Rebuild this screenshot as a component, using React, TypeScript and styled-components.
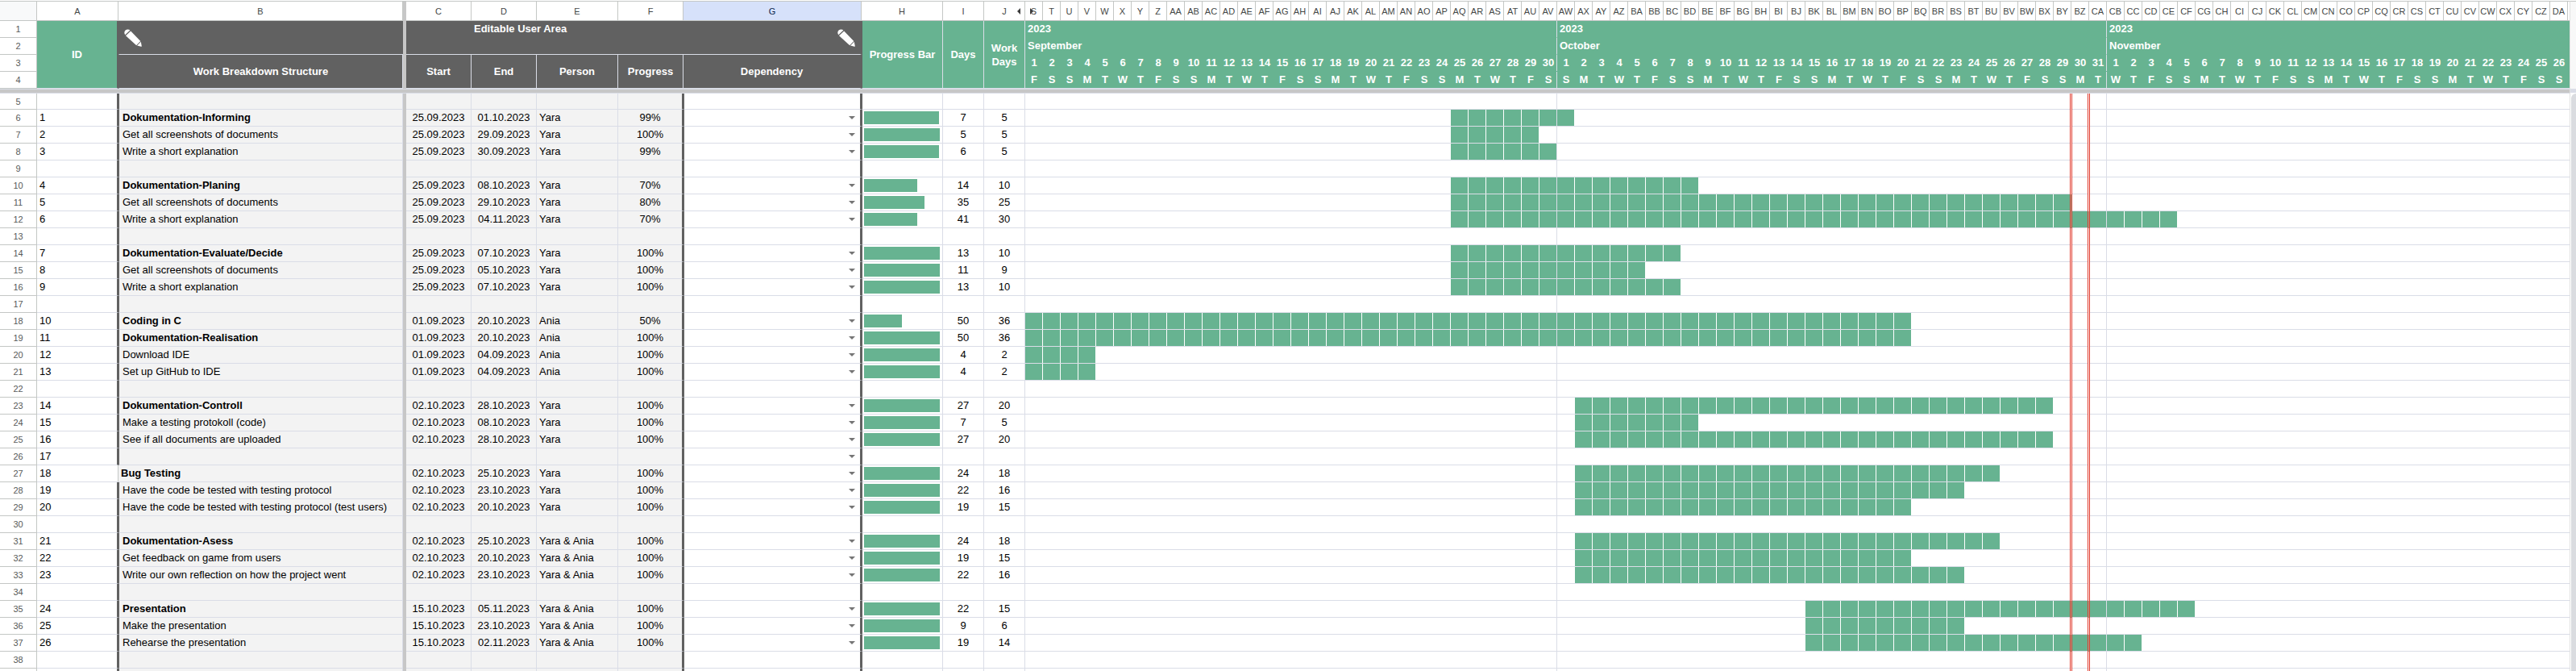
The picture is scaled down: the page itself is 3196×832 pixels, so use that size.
import React from "react";
import styled, { createGlobalStyle, css } from "styled-components";

const GREEN = "#67b391";
const DARK = "#616161";
const LINE = "#dadde7";
const RULE = "#c4c7c5";
const FREEZE = "#c7c7c7";
const RED = "#e0392b";

const GlobalStyle = createGlobalStyle`
  *, *::before, *::after { box-sizing: border-box; }
  body {
    margin: 0;
    background: #fff;
    color: #000;
    font-family: "Liberation Sans", Arial, sans-serif;
    font-size: 13px;
    line-height: 20px;
  }
`;

type Task = {
  id: string;
  name?: string;
  bold?: boolean;
  start?: string;
  end?: string;
  person?: string;
  progress?: number;
  days?: number;
  workDays?: number;
  unboxed?: boolean;
};

const task = (
  id: string, name: string, start: string, end: string, person: string,
  progress: number, days: number, workDays: number, bold = false, unboxed = false,
): Task => ({ id, name, start, end, person, progress, days, workDays, bold, unboxed });

const ROWS: (Task | null)[] = [
  null,
  task("1", "Dokumentation-Informing", "25.09.2023", "01.10.2023", "Yara", 99, 7, 5, true),
  task("2", "Get all screenshots of documents", "25.09.2023", "29.09.2023", "Yara", 100, 5, 5),
  task("3", "Write a short explanation", "25.09.2023", "30.09.2023", "Yara", 99, 6, 5),
  null,
  task("4", "Dokumentation-Planing", "25.09.2023", "08.10.2023", "Yara", 70, 14, 10, true),
  task("5", "Get all screenshots of documents", "25.09.2023", "29.10.2023", "Yara", 80, 35, 25),
  task("6", "Write a short explanation", "25.09.2023", "04.11.2023", "Yara", 70, 41, 30),
  null,
  task("7", "Dokumentation-Evaluate/Decide", "25.09.2023", "07.10.2023", "Yara", 100, 13, 10, true),
  task("8", "Get all screenshots of documents", "25.09.2023", "05.10.2023", "Yara", 100, 11, 9),
  task("9", "Write a short explanation", "25.09.2023", "07.10.2023", "Yara", 100, 13, 10),
  null,
  task("10", "Coding in C", "01.09.2023", "20.10.2023", "Ania", 50, 50, 36, true),
  task("11", "Dokumentation-Realisation", "01.09.2023", "20.10.2023", "Ania", 100, 50, 36, true),
  task("12", "Download IDE", "01.09.2023", "04.09.2023", "Ania", 100, 4, 2),
  task("13", "Set up GitHub to IDE", "01.09.2023", "04.09.2023", "Ania", 100, 4, 2),
  null,
  task("14", "Dokumentation-Controll", "02.10.2023", "28.10.2023", "Yara", 100, 27, 20, true),
  task("15", "Make a testing protokoll (code)", "02.10.2023", "08.10.2023", "Yara", 100, 7, 5),
  task("16", "See if all documents are uploaded", "02.10.2023", "28.10.2023", "Yara", 100, 27, 20),
  { id: "17" },
  task("18", "Bug Testing", "02.10.2023", "25.10.2023", "Yara", 100, 24, 18, true, true),
  task("19", "Have the code be tested with testing protocol", "02.10.2023", "23.10.2023", "Yara", 100, 22, 16),
  task("20", "Have the code be tested with testing protocol (test users)", "02.10.2023", "20.10.2023", "Yara", 100, 19, 15),
  null,
  task("21", "Dokumentation-Asess", "02.10.2023", "25.10.2023", "Yara & Ania", 100, 24, 18, true),
  task("22", "Get feedback on game from users", "02.10.2023", "20.10.2023", "Yara & Ania", 100, 19, 15),
  task("23", "Write our own reflection on how the project went", "02.10.2023", "23.10.2023", "Yara & Ania", 100, 22, 16),
  null,
  task("24", "Presentation", "15.10.2023", "05.11.2023", "Yara & Ania", 100, 22, 15, true),
  task("25", "Make the presentation", "15.10.2023", "23.10.2023", "Yara & Ania", 100, 9, 6),
  task("26", "Rehearse the presentation", "15.10.2023", "02.11.2023", "Yara & Ania", 100, 19, 14),
  null,
];

const MONTHS = [
  { name: "September", year: "2023", length: 30, shown: 30 },
  { name: "October", year: "2023", length: 31, shown: 31 },
  { name: "November", year: "2023", length: 30, shown: 26 },
];
const DAYS = MONTHS.flatMap((m) =>
  Array.from({ length: m.shown }, (_, i) => ({ day: i + 1, last: i + 1 === m.length })),
).map((d, index) => ({ ...d, index, weekday: "FSSMTWT"[index % 7] }));

const TODAY = 59;

const dayIndex = (date: string) => {
  const [day, month] = date.split(".").map(Number);
  return MONTHS.slice(0, month - 9).reduce((sum, m) => sum + m.length, 0) + day - 1;
};

const columnName = (n: number): string =>
  n < 26 ? String.fromCharCode(65 + n) : columnName(Math.floor(n / 26) - 1) + String.fromCharCode(65 + (n % 26));

const Page = styled.main`
  display: flex;
  height: 100vh;
  overflow: hidden;
  padding-top: 1px;
`;

const Viewport = styled.div`
  flex: 1;
  min-width: 0;
  overflow: hidden;
  border-top: 1px solid ${RULE};
`;

const Sheet = styled.table`
  width: 100%;
  table-layout: fixed;
  border-collapse: separate;
  border-spacing: 0;
  white-space: nowrap;
  th, td { padding: 0; }
`;

const Col = styled.col<{ $w?: number }>`
  ${(p) => p.$w && `width: ${p.$w}px;`}
`;

const Row = styled.tr<{ $h?: number }>`
  height: ${(p) => p.$h ?? 21}px;
`;

const Letter = styled.th<{ $selected?: boolean; $corner?: boolean }>`
  position: relative;
  border-right: 1px solid ${RULE};
  border-bottom: 1px solid ${RULE};
  background: ${(p) => (p.$selected ? "#d6e1fa" : p.$corner ? "#f8f9fa" : "#fff")};
  color: ${(p) => (p.$selected ? "#0a1f4d" : "#444746")};
  font-size: 11px;
  font-weight: 400;
`;

const RowNumber = styled.th`
  border-right: 1px solid ${RULE};
  border-bottom: 1px solid ${RULE};
  background: #fff;
  color: #575a59;
  font-size: 11px;
  font-weight: 400;
  line-height: 18px;
`;

const Unhide = styled.button<{ $side: "left" | "right" }>`
  position: absolute;
  top: 0;
  bottom: 0;
  ${(p) => (p.$side === "left" ? "right: 5px;" : "left: 6px;")}
  display: flex;
  align-items: center;
  padding: 0;
  border: 0;
  background: none;
  color: #3c3c3c;
`;

const FreezeColumn = styled.td`
  background: ${FREEZE};
`;

const FreezeRow = styled.td`
  height: 6px;
  border-top: 1px solid ${LINE};
  border-bottom: 1px solid ${LINE};
  background: ${FREEZE};
`;

const Head = styled.th<{ $tone: string; $edge?: "light" | "dark" | "none"; $from?: boolean }>`
  background: ${(p) => p.$tone};
  color: #fff;
  font-weight: 700;
  line-height: 17px;
  white-space: normal;
  border-bottom: 1px solid ${LINE};
  border-right: ${(p) =>
    p.$edge === "dark" ? `2px solid ${DARK}` : p.$edge === "none" ? "0" : `1px solid ${LINE}`};
  ${(p) => p.$from && `border-left: 1px solid ${DARK};`}
`;

const Banner = styled.div<{ $end?: boolean }>`
  display: flex;
  justify-content: space-between;
  height: 41px;
  padding: 0 5px 0 ${(p) => (p.$end ? 3 : 5)}px;
  line-height: 20px;
`;

const PencilIcon = styled.svg`
  width: 24px;
  height: 24px;
  margin-top: 9px;
`;

const MonthCell = styled.th<{ $line: boolean }>`
  padding-left: 3px !important;
  background: ${GREEN};
  color: #fff;
  text-align: left;
  border-bottom: 1px solid ${GREEN};
  ${(p) => p.$line && `border-right: 1px solid ${LINE};`}
`;

const DayHead = styled.th<{ $line: boolean; $last?: boolean }>`
  background: ${GREEN};
  color: #fff;
  box-shadow: inset -1px 0 ${(p) => (p.$line ? LINE : GREEN)};
  border-bottom: 1px solid ${(p) => (p.$last ? LINE : GREEN)};
`;

const Filler = styled.td<{ $tone?: string; $line?: string }>`
  background: ${(p) => p.$tone ?? "#fff"};
  border-bottom: 1px solid ${(p) => p.$line ?? LINE};
`;

const Cell = styled.td<{ $grey?: boolean; $bold?: boolean; $center?: boolean; $edge?: "dark" | "rule"; $from?: boolean }>`
  padding: 0 3px 0 ${(p) => (p.$from ? 4 : 3)}px !important;
  border-right: 1px solid ${(p) => (p.$edge === "rule" ? RULE : LINE)};
  border-bottom: 1px solid ${LINE};
  background: ${(p) => (p.$grey ? "#f3f3f3" : "#fff")};
  font-weight: ${(p) => (p.$bold ? 700 : 400)};
  text-align: ${(p) => (p.$center ? "center" : "left")};
  ${(p) => p.$edge === "dark" && `border-right: 2px solid ${DARK};`}
  ${(p) => p.$from && `border-left: 1px solid ${DARK};`}
`;

const BarCell = styled(Cell)`
  padding: 0 3px 0 2px !important;
`;

const Progress = styled.div`
  height: 16px;
  background: ${GREEN};
`;

const Picker = styled.div`
  display: grid;
  align-items: center;
  height: 20px;
`;

const Select = styled.select`
  grid-area: 1 / 1;
  width: 100%;
  height: 20px;
  padding: 0;
  border: 0;
  background: none;
  font: inherit;
  appearance: none;
`;

const Caret = styled.svg`
  grid-area: 1 / 1;
  justify-self: end;
  width: 8px;
  height: 4px;
  margin-right: 3px;
  pointer-events: none;
`;

const DayCell = styled.td<{ $on: boolean; $line: boolean; $marker: boolean }>`
  background: ${(p) => (p.$on ? GREEN : "#fff")};
  box-shadow: inset -1px 0 ${(p) => (p.$line ? LINE : "#fff")};
  border-bottom: 1px solid ${LINE};
  ${(p) => p.$marker && css`
    position: relative;
    &::after {
      content: "";
      position: absolute;
      z-index: 1;
      top: 0;
      bottom: -1px;
      right: -1px;
      width: 3px;
      border: 0 solid ${RED};
      border-width: 0 1px;
      background: ${p.$on ? "#8fb49b" : "#fff"};
    }
  `}
`;

const ScrollRail = styled.aside`
  display: flex;
  flex-direction: column;
  width: 8px;
  border-top: 1px solid ${RULE};
  border-left: 1px solid #e1e1e1;
  background: #f8f8f8;
`;

const RailGap = styled.div`
  height: 108px;
`;

const RailDivider = styled.div`
  height: 5px;
  background: ${LINE};
`;

const RailTrack = styled.div`
  flex: 1;
  padding: 1px 0 0 1px;
  background: #fff;
`;

const Thumb = styled.div`
  height: 100%;
  border-radius: 6px 0 0 0;
  background: #dadce0;
`;

const Pencil = () => (
  <PencilIcon viewBox="0 0 24 24" aria-hidden="true">
    <path d="M2.6 2.6C4.4 1 6.8 1 8.4 2.6L2.2 8.3C0.9 6.6 1 4.2 2.6 2.6Z" fill="#fff" />
    <path d="M9.2 3.5L21.3 15.9L16.2 21.2L3 9.2Z" fill="#fff" />
    <path d="M21.8 16.8L22.8 22.3Q22.7 23 22 22.8L17.1 21.6Z" fill="#fff" />
  </PencilIcon>
);

const Arrow = ({ flip }: { flip?: boolean }) => (
  <svg width="4" height="8" viewBox="0 0 4 8" aria-hidden="true">
    <path d={flip ? "M0 0L4 4L0 8Z" : "M4 0L0 4L4 8Z"} fill="currentColor" />
  </svg>
);

const HeaderRows = () => (
  <thead>
    <Row $h={24}>
      <Letter $corner aria-label="Select all" />
      <Letter>A</Letter>
      <Letter>B</Letter>
      <FreezeColumn />
      {["C", "D", "E", "F"].map((c) => <Letter key={c}>{c}</Letter>)}
      <Letter $selected>G</Letter>
      <Letter>H</Letter>
      <Letter>I</Letter>
      <Letter>
        J
        <Unhide $side="left" aria-label="Show hidden columns before J"><Arrow /></Unhide>
      </Letter>
      {DAYS.map((d) => (
        <Letter key={d.index}>
          {d.index === 0 && (
            <Unhide $side="right" aria-label="Show hidden columns after S"><Arrow flip /></Unhide>
          )}
          {columnName(18 + d.index)}
        </Letter>
      ))}
      <Filler $line={RULE} />
    </Row>
    <Row>
      <RowNumber>1</RowNumber>
      <Head rowSpan={4} $tone={GREEN} $edge="dark">ID</Head>
      <Head rowSpan={2} $tone={DARK} $edge="none" $from><Banner><Pencil /></Banner></Head>
      <FreezeColumn rowSpan={4} />
      <Head rowSpan={2} $tone={DARK} $edge="none" />
      <Head rowSpan={2} colSpan={4} $tone={DARK} $edge="dark">
        <Banner $end>Editable User Area<Pencil /></Banner>
      </Head>
      <Head rowSpan={4} $tone={GREEN} $from>Progress Bar</Head>
      <Head rowSpan={4} $tone={GREEN}>Days</Head>
      <Head rowSpan={4} $tone={GREEN}>Work Days</Head>
      {MONTHS.map((m) => (
        <MonthCell key={m.name} colSpan={m.shown} $line={m.shown === m.length}>{m.year}</MonthCell>
      ))}
      <Filler $tone={GREEN} $line={GREEN} />
    </Row>
    <Row>
      <RowNumber>2</RowNumber>
      {MONTHS.map((m) => (
        <MonthCell key={m.name} colSpan={m.shown} $line={m.shown === m.length}>{m.name}</MonthCell>
      ))}
      <Filler $tone={GREEN} $line={GREEN} />
    </Row>
    <Row>
      <RowNumber>3</RowNumber>
      <Head rowSpan={2} $tone={DARK} $from>Work Breakdown Structure</Head>
      {["Start", "End", "Person", "Progress"].map((label) => (
        <Head key={label} rowSpan={2} $tone={DARK}>{label}</Head>
      ))}
      <Head rowSpan={2} $tone={DARK} $edge="dark">Dependency</Head>
      {DAYS.map((d) => <DayHead key={d.index} $line={d.last}>{d.day}</DayHead>)}
      <Filler $tone={GREEN} $line={GREEN} />
    </Row>
    <Row>
      <RowNumber>4</RowNumber>
      {DAYS.map((d) => <DayHead key={d.index} $line={d.last} $last>{d.weekday}</DayHead>)}
      <Filler $tone={GREEN} />
    </Row>
    <Row $h={6}>
      <FreezeRow colSpan={DAYS.length + 13} />
    </Row>
  </thead>
);

const TaskRow = ({ row, number, height }: { row: Task | null; number?: number; height?: number }) => {
  const first = row?.start ? dayIndex(row.start) : -1;
  const last = row?.end ? dayIndex(row.end) : -2;
  return (
    <Row $h={height}>
      <RowNumber scope="row">{number}</RowNumber>
      <Cell $edge={row?.unboxed ? "rule" : "dark"}>{row?.id}</Cell>
      <Cell $grey $bold={row?.bold} $from={!row?.unboxed}>{row?.name}</Cell>
      <FreezeColumn />
      <Cell $grey $center>{row?.start}</Cell>
      <Cell $grey $center>{row?.end}</Cell>
      <Cell $grey>{row?.person}</Cell>
      <Cell $grey $center $edge="dark">{row?.progress !== undefined && `${row.progress}%`}</Cell>
      <Cell $from $edge="dark">
        {row && (
          <Picker>
            <Select aria-label={`Dependency of task ${row.id}`} defaultValue=""><option value="" /></Select>
            <Caret viewBox="0 0 8 4" aria-hidden="true"><path d="M0 0H8L4 4Z" fill="#757575" /></Caret>
          </Picker>
        )}
      </Cell>
      <BarCell $from>
        {row?.progress !== undefined && <Progress style={{ width: `${row.progress}%` }} />}
      </BarCell>
      <Cell $center>{row?.days}</Cell>
      <Cell $center>{row?.workDays}</Cell>
      {DAYS.map((d) => (
        <DayCell
          key={d.index}
          $on={d.index >= first && d.index <= last}
          $line={d.last}
          $marker={d.index === TODAY || d.index === TODAY - 1}
        />
      ))}
      <Filler />
    </Row>
  );
};

export default function App() {
  return (
    <>
      <GlobalStyle />
      <Page>
        <Viewport>
          <Sheet>
            <colgroup>
              {[46, 101, 353, 4, 81, 81, 101, 81, 221, 101, 51, 51].map((w, i) => <Col key={i} $w={w} />)}
              {DAYS.map((d) => <Col key={d.index} $w={22} />)}
              <Col />
            </colgroup>
            <HeaderRows />
            <tbody>
              {ROWS.map((row, i) => (
                <TaskRow key={i} row={row} number={i + 5} height={i === 0 ? 20 : 21} />
              ))}
              <TaskRow row={null} />
            </tbody>
          </Sheet>
        </Viewport>
        <ScrollRail>
          <RailGap />
          <RailDivider />
          <RailTrack><Thumb /></RailTrack>
        </ScrollRail>
      </Page>
    </>
  );
}
